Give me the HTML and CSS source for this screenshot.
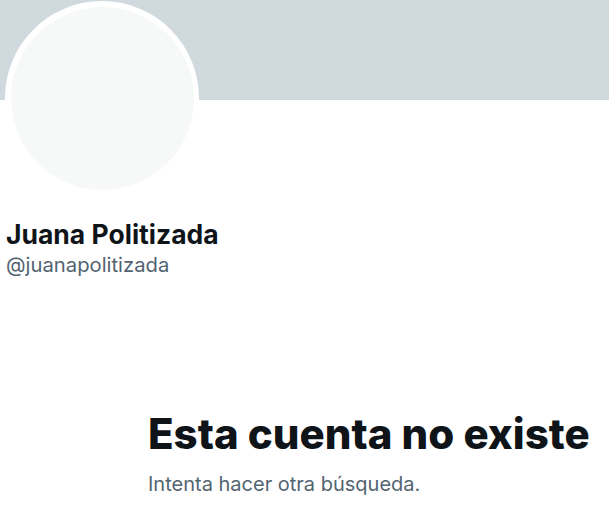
FILE: index.html
```html
<!DOCTYPE html>
<html lang="es">
<head>
<meta charset="utf-8">
<link rel="stylesheet" href="styles.css">
</head>
<body>
<div class="page">
  <div class="banner"></div>
  <div class="profile">
    <div class="avatar"><div class="avatar-inner"></div></div>
    <div class="names">
      <div class="name">Juana Politizada</div>
      <div class="handle">@juanapolitizada</div>
    </div>
  </div>
  <div class="empty">
    <h1 class="empty-title">Esta cuenta no existe</h1>
    <p class="empty-sub">Intenta hacer otra búsqueda.</p>
  </div>
</div>
</body>
</html>
```
FILE: styles.css
```css
html, body {
  margin: 0;
  padding: 0;
  background: #ffffff;
}
body {
  font-family: "Inter", "Liberation Sans", sans-serif;
  color: #0f1419;
  width: 609px;
  height: 512px;
  overflow: hidden;
}
.banner {
  height: 100px;
  background: #cfd9de;
}
.profile {
  padding-left: 5px;
}
.avatar {
  width: 194px;
  height: 194px;
  margin-top: -99px;
  border-radius: 50%;
  background: #ffffff;
  display: flex;
  align-items: center;
  justify-content: center;
}
.avatar-inner {
  width: 183px;
  height: 183px;
  border-radius: 50%;
  background: #f7f9f9;
}
.names {
  padding-left: 1px;
  margin-top: 22px;
}
.name {
  font-weight: 700;
  font-size: 26.5px;
  line-height: 34px;
}
.handle {
  font-size: 20.25px;
  line-height: 28px;
  color: #536471;
}
.empty {
  padding-left: 148px;
  margin-top: 130px;
}
.empty-title {
  margin: 0;
  font-size: 42px;
  font-weight: 800;
  line-height: 50px;
}
.empty-sub {
  margin: 11px 0 0;
  font-size: 20px;
  line-height: 28px;
  color: #536471;
}
```
